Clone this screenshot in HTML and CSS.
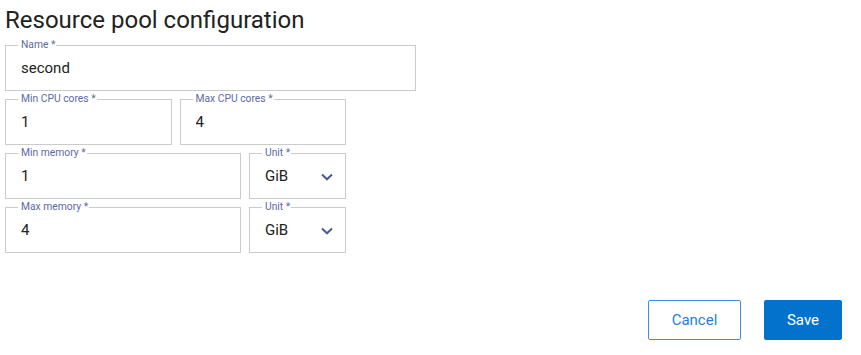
FILE: index.html
```html
<!DOCTYPE html>
<html lang="en">
<head>
  <meta charset="UTF-8" />
  <title>Resource pool configuration</title>
  <link rel="stylesheet" href="styles.css">
</head>
<body>

  <h1>Resource pool configuration</h1>

  <form class="pool-form">
    <fieldset class="field w-name">
      <legend>Name *</legend>
      <input name="name" value="second">
    </fieldset>

    <div class="row">
      <fieldset class="field w-cpu">
        <legend>Min CPU cores *</legend>
        <input name="minCpu" value="1">
      </fieldset>
      <fieldset class="field w-cpu">
        <legend>Max CPU cores *</legend>
        <input name="maxCpu" value="4">
      </fieldset>
    </div>

    <div class="row">
      <fieldset class="field w-mem">
        <legend>Min memory *</legend>
        <input name="minMem" value="1">
      </fieldset>
      <fieldset class="field w-unit">
        <legend>Unit *</legend>
        <div class="select">
          <span>GiB</span>
          <svg width="12" height="8" viewBox="0 0 12 8"><path d="M1 1.5 L6 6.3 L11 1.5" fill="none" stroke="#4b5a9b" stroke-width="2"/></svg>
        </div>
      </fieldset>
    </div>

    <div class="row">
      <fieldset class="field w-mem">
        <legend>Max memory *</legend>
        <input name="maxMem" value="4">
      </fieldset>
      <fieldset class="field w-unit">
        <legend>Unit *</legend>
        <div class="select">
          <span>GiB</span>
          <svg width="12" height="8" viewBox="0 0 12 8"><path d="M1 1.5 L6 6.3 L11 1.5" fill="none" stroke="#4b5a9b" stroke-width="2"/></svg>
        </div>
      </fieldset>
    </div>

    <div class="actions">
      <button type="button" class="btn btn-outline">Cancel</button>
      <button type="button" class="btn btn-primary">Save</button>
    </div>
  </form>

</body>
</html>
```

FILE: styles.css
```css
body {
  font-family: Roboto, "Liberation Sans", sans-serif;
  margin: 0;
  padding: 0 5px;
  background: #fff;
  color: #222;
}

h1 {
  font-size: 24px;
  font-weight: 400;
  line-height: 28px;
  margin: 6px 0 0;
  color: #222;
}

.pool-form {
  display: flex;
  flex-direction: column;
  gap: 2px;
  margin-top: 5px;
}

.row {
  display: flex;
  gap: 8px;
  width: 341px;
}

.field {
  box-sizing: border-box;
  height: 52px;
  margin: 0;
  padding: 0;
  border: 1px solid #cbcbcb;
  min-width: 0;
}

.field legend {
  font-size: 10.3px;
  line-height: 12px;
  color: #5d69a6;
  margin-left: 12px;
  padding: 0 1px 0 3px;
}

.w-name { width: 411px; }
.w-cpu { flex: 1; }
.w-mem { width: 236px; }
.w-unit { flex: 1; }

.field input {
  display: block;
  box-sizing: border-box;
  width: 100%;
  height: 34px;
  border: none;
  outline: none;
  padding: 0 15px;
  font-family: inherit;
  font-size: 15px;
  color: #222;
  background: transparent;
}

.select {
  display: flex;
  align-items: center;
  justify-content: space-between;
  height: 34px;
  padding: 0 12px 0 15px;
  font-size: 15px;
  color: #222;
}

.select svg {
  margin-top: 1px;
}

.actions {
  display: flex;
  justify-content: flex-end;
  gap: 23px;
  margin-top: 45px;
  padding-right: 14px;
}

.btn {
  box-sizing: border-box;
  height: 40px;
  border-radius: 2px;
  font-family: inherit;
  font-size: 15px;
  cursor: pointer;
}

.btn-outline {
  width: 93px;
  background: #fff;
  color: #1f7fd6;
  border: 1px solid #3c8fdc;
}

.btn-primary {
  width: 78px;
  background: #0372cd;
  color: #fff;
  border: none;
}
```
